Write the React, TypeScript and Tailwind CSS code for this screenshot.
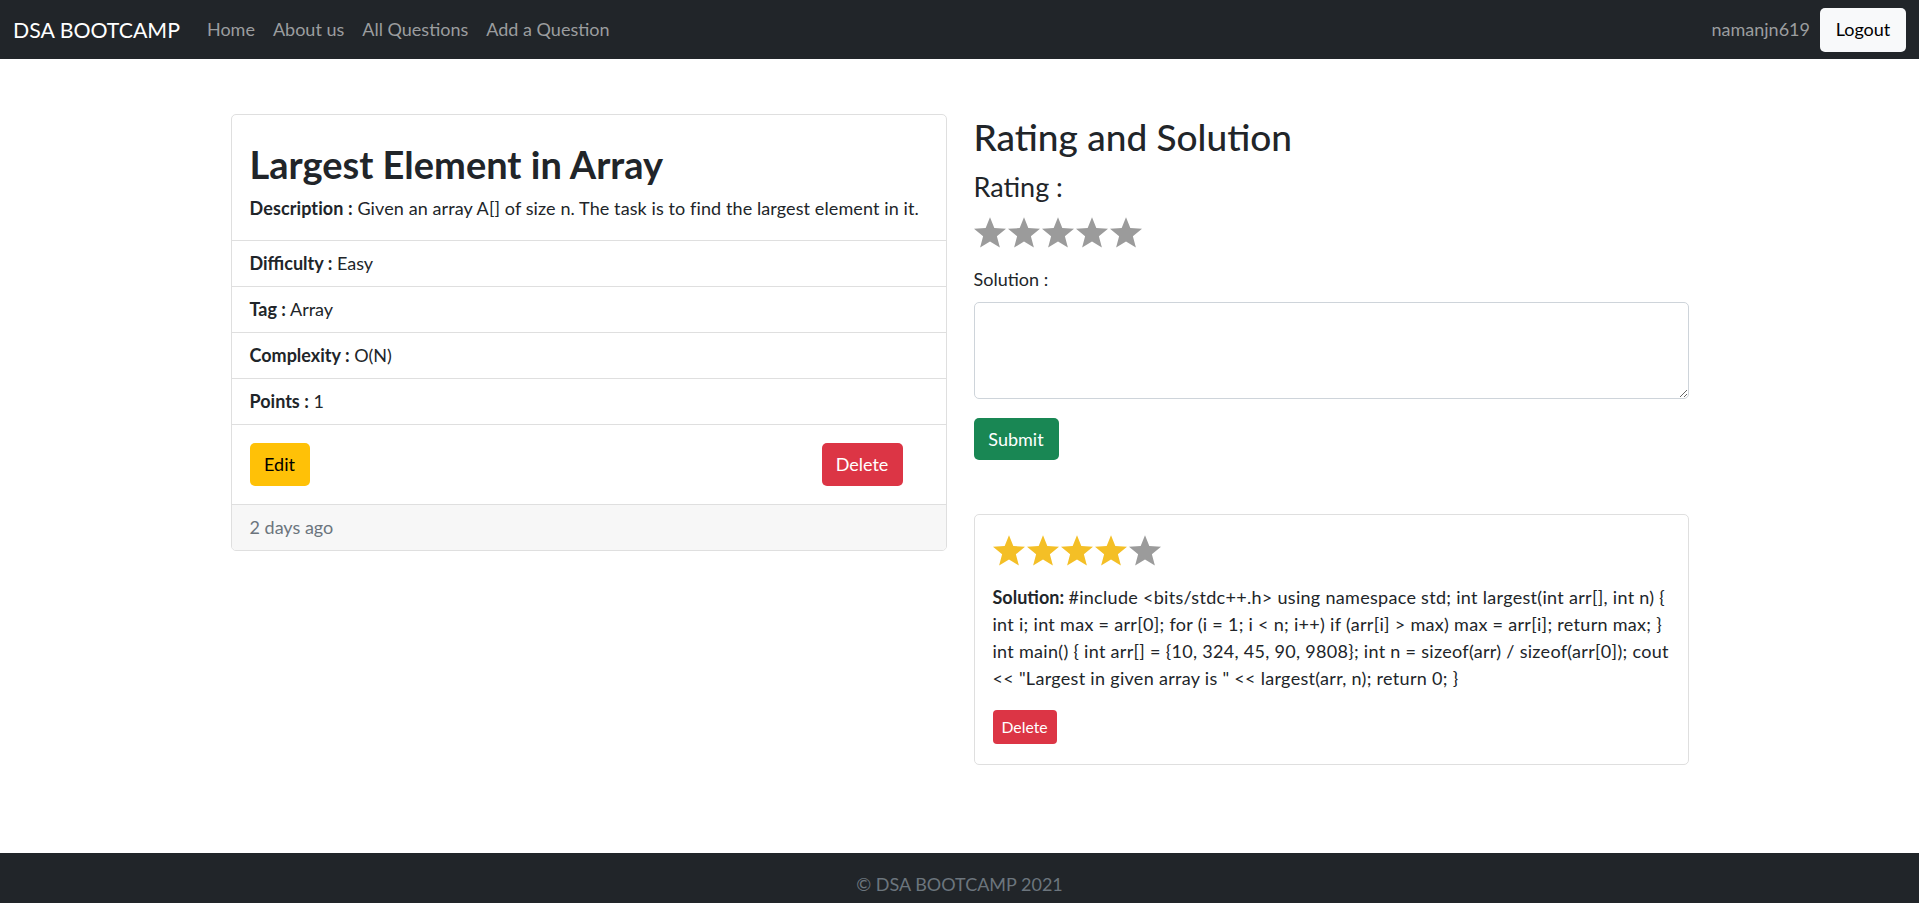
import React from "react";

const navLinks = ["Home", "About us", "All Questions", "Add a Question"];

const details = [
  { label: "Difficulty :", value: "Easy" },
  { label: "Tag :", value: "Array" },
  { label: "Complexity :", value: "O(N)" },
  { label: "Points :", value: "1" },
];

// wrapped the same way the original page wraps it
const solutionLines = [
  "#include <bits/stdc++.h> using namespace std; int largest(int arr[], int n) {",
  "int i; int max = arr[0]; for (i = 1; i < n; i++) if (arr[i] > max) max = arr[i]; return max; }",
  "int main() { int arr[] = {10, 324, 45, 90, 9808}; int n = sizeof(arr) / sizeof(arr[0]); cout",
  '<< "Largest in given array is " << largest(arr, n); return 0; }',
];

function Star({ filled }: { filled: boolean }) {
  return (
    <svg
      width="32"
      height="31"
      viewBox="0 0 100 96"
      className={filled ? "fill-[#f4bf26]" : "fill-[#9b9b9b]"}
    >
      <polygon points="50,0 63.5,34 100,36.4 71.5,60 80.9,95.2 50,76 19.1,95.2 28.5,60 0,36.4 36.5,34" />
    </svg>
  );
}

function Stars({ value }: { value: number }) {
  return (
    <div className="flex items-center gap-[2px]">
      {[1, 2, 3, 4, 5].map((i) => (
        <Star key={i} filled={i <= value} />
      ))}
    </div>
  );
}

export default function App() {
  return (
    <div className="min-h-screen bg-white font-['Lato',sans-serif] text-[18px] leading-[27px] text-[#212529]">
      {/* navbar */}
      <nav className="h-[59px] bg-[#212529] flex items-center justify-between px-[13px]">
        <div className="flex items-center">
          <a className="text-[21.3px] leading-[30px] text-white mr-[18px]">
            DSA BOOTCAMP
          </a>
          {navLinks.map((l) => (
            <a key={l} className="px-[9px] text-[#9b9d9f]">
              {l}
            </a>
          ))}
        </div>
        <div className="flex items-center">
          <span className="text-[#9b9d9f] mr-[10px]">namanjn619</span>
          <button className="h-[44px] w-[86px] bg-[#f8f9fa] rounded-[5px] text-black">
            Logout
          </button>
        </div>
      </nav>

      <main className="w-[1458px] mx-auto flex items-start gap-[27px] pt-[55px] pb-[88px]">
        {/* question card */}
        <div className="w-[716px] border border-[#dfdfdf] rounded-[5px] overflow-hidden">
          <div className="px-[18px] pt-[28px] pb-[18px]">
            <h2 className="text-[38px] leading-[43px] font-bold mb-[9px]">
              Largest Element in Array
            </h2>
            <p className="tracking-[0.1px]">
              <b>Description :</b> Given an array A[] of size n. The task is to
              find the largest element in it.
            </p>
          </div>
          {details.map((d) => (
            <div
              key={d.label}
              className="border-t border-[#dfdfdf] px-[18px] py-[9px]"
            >
              <b>{d.label}</b> {d.value}
            </div>
          ))}
          <div className="border-t border-[#dfdfdf] p-[18px] flex justify-between">
            <button className="h-[43px] w-[60px] bg-[#ffc107] rounded-[5px] text-black">
              Edit
            </button>
            <button className="h-[43px] w-[81px] bg-[#dc3545] rounded-[5px] text-white mr-[25px]">
              Delete
            </button>
          </div>
          <div className="border-t border-[#dfdfdf] bg-[#f7f7f7] px-[18px] py-[9px] text-[#6c757d]">
            2 days ago
          </div>
        </div>

        {/* rating and solution */}
        <div className="w-[715px]">
          <h2 className="text-[37px] leading-[43px] font-medium mt-[1px] mb-[13px]">
            Rating and Solution
          </h2>
          <h4 className="text-[27px] leading-[32px]">Rating :</h4>
          <div className="mt-[14px]">
            <Stars value={0} />
          </div>
          <label className="block mt-[18px]">Solution :</label>
          <textarea className="block mt-[9px] w-full h-[97px] border border-[#ced4da] rounded-[5px] px-[13px] py-[7px] outline-none" />
          <button className="mt-[19px] h-[42px] w-[85px] bg-[#198754] rounded-[5px] text-white">
            Submit
          </button>

          <div className="mt-[54px] border border-[#dfdfdf] rounded-[5px] px-[18px] pt-[18px] pb-[20px]">
            <div className="h-[35px] flex items-center">
              <Stars value={4} />
            </div>
            <p className="mt-[16px] tracking-[0.3px] whitespace-nowrap">
              {solutionLines.map((line, i) => (
                <React.Fragment key={i}>
                  {i === 0 && <b className="tracking-normal">Solution: </b>}
                  {line}
                  {i < solutionLines.length - 1 && <br />}
                </React.Fragment>
              ))}
            </p>
            <button className="mt-[18px] h-[34px] px-[9px] bg-[#dc3545] rounded-[4px] text-white text-[15.75px] leading-[24px]">
              Delete
            </button>
          </div>
        </div>
      </main>

      <footer className="bg-[#212529] py-[18px] text-center text-[#6c757d]">
        © DSA BOOTCAMP 2021
      </footer>
    </div>
  );
}
